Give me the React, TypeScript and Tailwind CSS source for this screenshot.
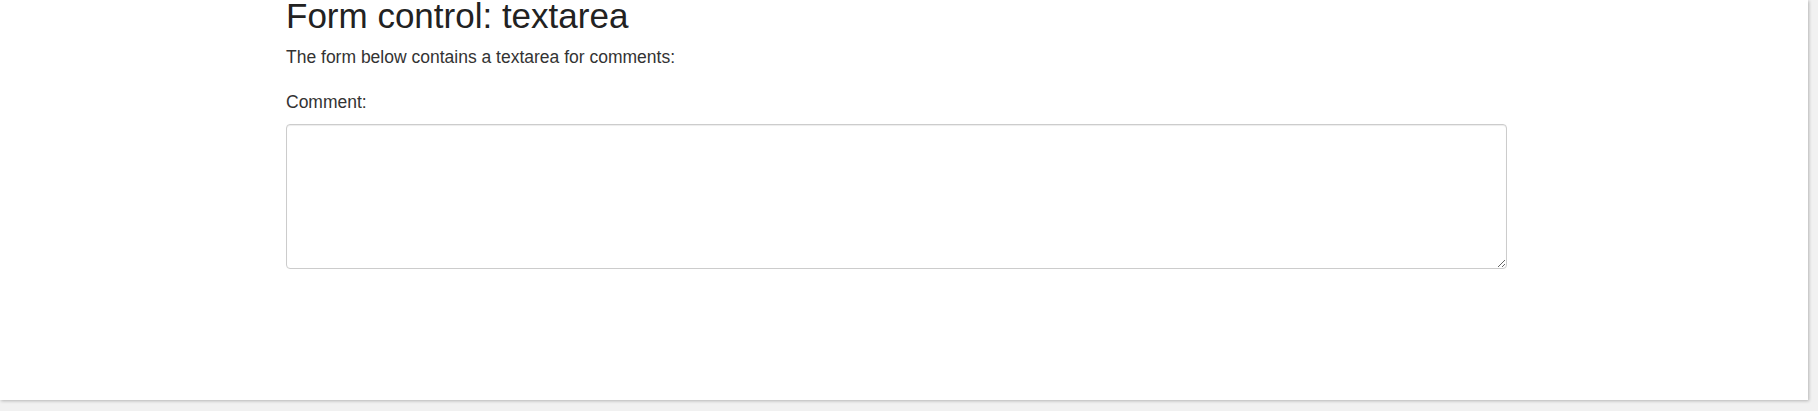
export default function App() {
  return (
    <div className="h-[411px] w-[1818px] overflow-hidden bg-[#f1f1f1]">
      <div className="h-[400px] w-[1808px] overflow-hidden bg-white shadow-[1px_1px_3px_rgba(0,0,0,0.25)]">
        <div
          className="ml-[286px] w-[1221px] text-[#333]"
          style={{ fontFamily: '"Liberation Sans", Arial, sans-serif' }}
        >
          <h2 className="-mt-[3px] text-[35px] leading-[1.1] font-normal text-[#222]">
            Form control: textarea
          </h2>
          <p className="mt-[9px] text-[17.5px] leading-[25px]">
            The form below contains a textarea for comments:
          </p>
          <form className="mt-[20px]">
            <label htmlFor="comment" className="block text-[17.5px] leading-[25px]">
              Comment:
            </label>
            <textarea
              id="comment"
              rows={5}
              className="mt-[9px] block h-[145px] w-full rounded-[4px] border border-[#ccc] bg-white px-3 py-1.5 text-[17.5px] shadow-[inset_0_1px_1px_rgba(0,0,0,0.075)] outline-none"
            />
          </form>
        </div>
      </div>
    </div>
  );
}
